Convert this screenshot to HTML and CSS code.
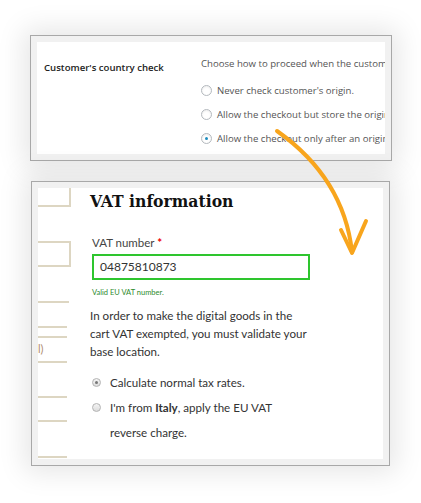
FILE: index.html
```html
<!DOCTYPE html>
<html>
<head>
<meta charset="utf-8">
<link rel="stylesheet" href="styles.css">
</head>
<body>
<div class="page">
  <div class="card card-top">
    <div class="inner top-inner">
      <div class="th">Customer's country check</div>
      <div class="td">
        <p class="desc">Choose how to proceed when the customer's country cannot be detected.</p>
        <div class="wp-radio"><span class="wp-dot"></span>Never check customer's origin.</div>
        <div class="wp-radio"><span class="wp-dot"></span>Allow the checkout but store the origin of the customer.</div>
        <div class="wp-radio"><span class="wp-dot on"></span>Allow the checkout only after an origin check.</div>
      </div>
    </div>
  </div>

  <div class="card card-bottom">
    <div class="inner bottom-inner">
      <div class="frags">
        <div class="frag box1"></div>
        <div class="frag box2"></div>
        <div class="frag line l1"></div>
        <div class="frag line l2"></div>
        <div class="frag line l3"></div>
        <div class="frag ftext">l)</div>
        <div class="frag line l4"></div>
        <div class="frag line l5"></div>
        <div class="frag line l6"></div>
        <div class="frag line l7"></div>
      </div>
      <div class="main">
        <h2 class="title">VAT information</h2>
        <div class="field-label">VAT number <span class="req">*</span></div>
        <div class="vat-input">04875810873</div>
        <div class="valid">Valid EU VAT number.</div>
        <p class="info">In order to make the digital goods in the cart VAT exempted, you must validate your base location.</p>
        <div class="opt"><span class="g-dot on"></span><span>Calculate normal tax rates.</span></div>
        <div class="opt"><span class="g-dot"></span><span>I'm from <b>Italy</b>, apply the EU VAT<br>reverse charge.</span></div>
      </div>
    </div>
  </div>

  <svg class="arrow" width="421" height="503" viewBox="0 0 421 503">
    <path d="M277,131 C318,160 346,198 352,252" fill="none" stroke="#f8a51d" stroke-width="4" stroke-linecap="round"/>
    <path d="M341,230 L352,253 L366,221" fill="none" stroke="#f8a51d" stroke-width="4" stroke-linecap="round" stroke-linejoin="round"/>
  </svg>
</div>
</body>
</html>
```

FILE: styles.css
```css
* { box-sizing: border-box; }
html, body { margin: 0; padding: 0; background: #fff; }
.page {
  position: relative;
  width: 421px;
  height: 503px;
  overflow: hidden;
  padding-top: 35px;
}
.card {
  border: 1px solid #a8a8a8;
  background: #f1f1f1;
  padding: 6px;
  box-shadow: 0 0 26px 6px rgba(0, 0, 0, 0.10);
}
.card-top {
  margin-left: 30px;
  width: 362px;
  height: 126px;
}
.card-bottom {
  margin-left: 31px;
  margin-top: 20px;
  width: 359px;
  height: 285px;
}
.inner {
  background: #fff;
  height: 100%;
  overflow: hidden;
}

/* top card */
.top-inner {
  display: flex;
  padding: 15px 0 0 7px;
  font-family: "Open Sans", sans-serif;
  font-size: 9.6px;
  color: #444;
  white-space: nowrap;
}
.th {
  width: 157px;
  flex: none;
  font-weight: 600;
  color: #222;
  padding-top: 4px;
}
.td { flex: none; }
.desc { margin: 0 0 8px 0; line-height: 13px; color: #555; }
.wp-radio {
  display: flex;
  align-items: center;
  height: 24px;
  color: #555;
}
.wp-dot {
  width: 11px;
  height: 11px;
  border: 1px solid #b4b9be;
  border-radius: 50%;
  margin-right: 5px;
  background: #fff;
  box-shadow: inset 0 1px 2px rgba(0,0,0,0.08);
  position: relative;
}
.wp-dot.on::after {
  content: "";
  position: absolute;
  left: 3px; top: 3px;
  width: 3px; height: 3px;
  border-radius: 50%;
  background: #1e8cbe;
}

/* bottom card */
.bottom-inner {
  display: flex;
}
.frags {
  width: 33px;
  flex: none;
  display: flex;
  flex-direction: column;
  margin-left: -2px;
}
.frag { flex: none; border-color: #ddd6c2; border-style: solid; border-width: 0; }
.box1 { height: 19px; border-right-width: 2px; border-bottom-width: 2px; width: 35px; }
.box2 { margin-top: 34px; height: 26px; border-width: 2px; width: 35px; }
.line { border-top-width: 2px; height: 0; }
.l1 { margin-top: 34px; width: 33px; }
.l2 { margin-top: 23px; width: 31px; }
.l3 { margin-top: 8px; width: 31px; }
.ftext {
  height: 22px;
  margin-left: 2px;
  font-family: "Lato", sans-serif;
  font-size: 11px;
  line-height: 22px;
  color: #b08a6e;
}
.l4 { margin-top: 1px; width: 31px; }
.l5 { margin-top: 33px; width: 31px; }
.l6 { margin-top: 22px; width: 31px; }
.l7 { margin-top: 34px; width: 31px; }

.main {
  margin-left: 21px;
  font-family: "Lato", sans-serif;
  color: #333;
}
.title {
  margin: 2px 0 0 0;
  font-family: "DejaVu Serif Condensed", "DejaVu Serif", serif;
  font-stretch: condensed;
  font-weight: bold;
  font-size: 17.4px;
  line-height: 22px;
  color: #111;
}
.field-label {
  margin-top: 24px;
  margin-left: 2px;
  font-size: 11.5px;
  line-height: 14px;
  color: #444;
}
.req { color: #e00; font-weight: bold; }
.vat-input {
  margin-top: 4px;
  margin-left: 2px;
  width: 218px;
  height: 26px;
  border: 2px solid #2ec52e;
  padding: 0 6px;
  font-size: 12px;
  line-height: 22px;
  color: #333;
}
.valid {
  margin-top: 8px;
  margin-left: 2px;
  font-size: 7.5px;
  line-height: 10px;
  color: #2d8a2d;
}
.info {
  margin: 9px 0 0 0;
  width: 222px;
  font-size: 11.6px;
  line-height: 18px;
  color: #333;
}
.opt {
  display: flex;
  align-items: flex-start;
  margin-top: 9px;
  margin-left: 2px;
  font-size: 11.6px;
  line-height: 25px;
}
.opt + .opt { margin-top: 0; }
.g-dot {
  flex: none;
  width: 9px;
  height: 9px;
  margin-top: 8px;
  margin-right: 9px;
  border: 1px solid #b3b3b3;
  border-radius: 50%;
  background: linear-gradient(#f4f4f4, #dcdcdc);
  position: relative;
}
.g-dot.on::after {
  content: "";
  position: absolute;
  left: 2px; top: 2px;
  width: 3px; height: 3px;
  border-radius: 50%;
  background: #777;
}

.arrow {
  position: absolute;
  left: 0;
  top: 0;
  pointer-events: none;
}
```
